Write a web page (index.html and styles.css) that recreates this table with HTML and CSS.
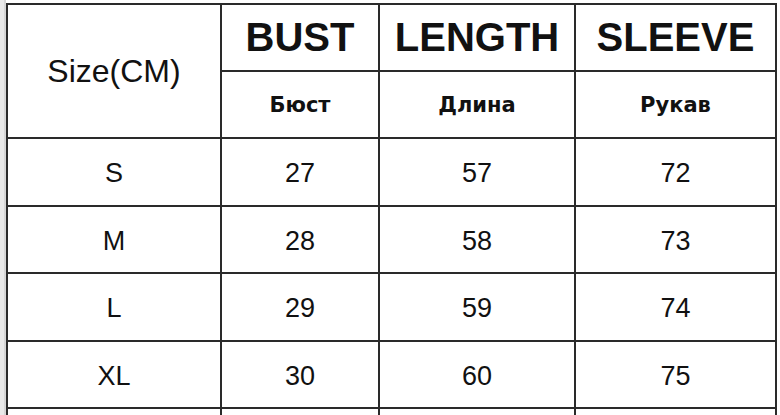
FILE: index.html
```html
<!DOCTYPE html>
<html>
<head>
<meta charset="utf-8">
<link rel="stylesheet" href="styles.css">
</head>
<body>
<div class="page">
  <div class="rowhead"></div>
  <table class="sizes">
    <colgroup>
      <col class="c1"><col class="c2"><col class="c3"><col class="c4">
    </colgroup>
    <tr class="h1">
      <td class="size-label" rowspan="2">Size(CM)</td>
      <th class="en">BUST</th>
      <th class="en">LENGTH</th>
      <th class="en">SLEEVE</th>
    </tr>
    <tr class="h2">
      <th class="ru">Бюст</th>
      <th class="ru">Длина</th>
      <th class="ru">Рукав</th>
    </tr>
    <tr class="r"><td>S</td><td>27</td><td>57</td><td>72</td></tr>
    <tr class="r"><td>M</td><td>28</td><td>58</td><td>73</td></tr>
    <tr class="r"><td>L</td><td>29</td><td>59</td><td>74</td></tr>
    <tr class="r"><td>XL</td><td>30</td><td>60</td><td>75</td></tr>
    <tr class="r"><td></td><td></td><td></td><td></td></tr>
  </table>
</div>
</body>
</html>
```

FILE: styles.css
```css
html, body {
  margin: 0;
  padding: 0;
  background: #ffffff;
  overflow: hidden;
}
.page {
  display: flex;
  align-items: flex-start;
  height: 415px;
  overflow: hidden;
}
.rowhead {
  width: 4px;
  height: 415px;
  background: #e9e9e9;
  border-right: 2px solid #d6d6d6;
  flex: none;
}
.sizes {
  border-collapse: collapse;
  margin-top: 3px;
  table-layout: fixed;
  width: 771px;
  flex: none;
  font-family: "Liberation Sans", Arial, sans-serif;
  color: #111;
}
.c1 { width: 214px; }
.c2 { width: 158px; }
.c3 { width: 196px; }
.c4 { width: 201px; }
.sizes td, .sizes th {
  border: 2px solid #2a2a2a;
  text-align: center;
  vertical-align: middle;
  padding: 0;
}
.h1, .h2 { height: 67px; }
.r { height: 67.5px; }
.size-label {
  font-size: 32px;
  font-weight: normal;
  padding-bottom: 2px;
}
.en {
  font-size: 40px;
  font-weight: bold;
  padding-bottom: 8px;
}
.ru {
  font-family: "DejaVu Sans", Verdana, sans-serif;
  font-size: 21px;
  font-weight: bold;
  padding-top: 4px;
}
.r td {
  font-size: 27px;
  padding-top: 4px;
}
```
